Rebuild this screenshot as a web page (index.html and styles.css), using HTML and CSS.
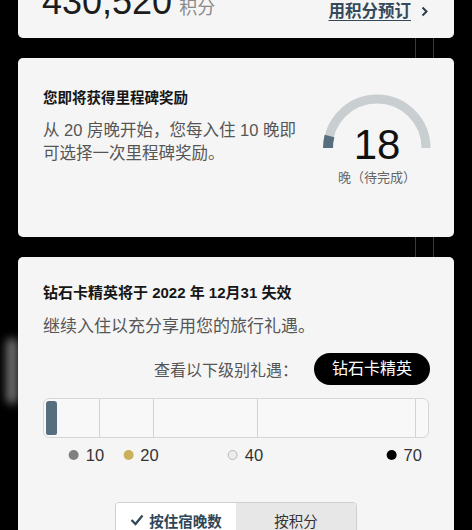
FILE: index.html
```html
<!DOCTYPE html>
<html lang="zh-CN">
<head>
    <meta charset="UTF-8">
    <meta name="viewport" content="width=device-width, initial-scale=1.0">
    <title>会员礼遇</title>
    <link rel="stylesheet" href="styles.css">
</head>
<body>
    <div class="glare"></div>
    <div class="container">
        <div class="card points">
            <div class="points-total">
                <span class="points-value">430,520</span>
                <span class="points-unit">积分</span>
            </div>
            <a class="redeem" href="#">
                <span class="redeem-text">用积分预订</span>
                <svg class="chevron" width="7" height="11" viewBox="0 0 7 11"><path d="M1.5 1.5 L5.5 5.5 L1.5 9.5" fill="none" stroke="#2c3e4c" stroke-width="2"/></svg>
            </a>
        </div>

        <div class="card milestone">
            <div class="milestone-text">
                <h3>您即将获得里程碑奖励</h3>
                <p>从 20 房晚开始，您每入住 10 晚即可选择一次里程碑奖励。</p>
            </div>
            <div class="gauge">
                <svg width="110" height="58" viewBox="0 0 110 58">
                    <!-- track, then the small completed piece on the left end -->
                    <path d="M6 55 A49 49 0 0 1 104 55" fill="none" stroke="#c9ced1" stroke-width="9"/>
                    <path d="M6 55 A49 49 0 0 1 7.5 43.1" fill="none" stroke="#566e7d" stroke-width="10"/>
                </svg>
                <div class="gauge-number">18</div>
                <div class="gauge-label">晚（待完成）</div>
            </div>
        </div>

        <div class="card status">
            <h3>钻石卡精英将于 2022 年 12月31 失效</h3>
            <p class="status-note">继续入住以充分享用您的旅行礼遇。</p>
            <div class="tier-row">
                <span>查看以下级别礼遇：</span>
                <span class="tier-pill">钻石卡精英</span>
            </div>

            <div class="track">
                <div class="track-fill"></div>
                <div class="track-mark" style="left: 14.3%"></div>
                <div class="track-mark" style="left: 28.4%"></div>
                <div class="track-mark" style="left: 55.5%"></div>
                <div class="track-mark" style="left: 96.6%"></div>
            </div>
            <div class="legend">
                <div class="legend-item" style="left: 14.3%"><span class="dot dot-silver"></span>10</div>
                <div class="legend-item" style="left: 28.4%"><span class="dot dot-gold"></span>20</div>
                <div class="legend-item" style="left: 55.5%"><span class="dot dot-platinum"></span>40</div>
                <div class="legend-item" style="left: 96.6%"><span class="dot dot-diamond"></span>70</div>
            </div>

            <div class="toggle">
                <button type="button" class="toggle-btn active">
                    <svg width="14" height="12" viewBox="0 0 14 12"><path d="M1.5 6 L5.5 10 L12.5 1.5" fill="none" stroke="#2e4657" stroke-width="2.2"/></svg>
                    按住宿晚数
                </button>
                <button type="button" class="toggle-btn">按积分</button>
            </div>
        </div>
    </div>
</body>
</html>
```

FILE: styles.css
```css
* { box-sizing: border-box; }
html, body { margin: 0; height: 530px; overflow: hidden; }
body {
    position: relative;
    font-family: "Liberation Sans", "Noto Sans CJK SC", sans-serif;
    color: #1a1a1a;
    background:
        linear-gradient(90deg, transparent 415px, #3a3a3a 415px, #3a3a3a 416px, transparent 416px,
            transparent 433px, #3a3a3a 433px, #3a3a3a 434px, transparent 434px),
        #000;
}
.glare { position: absolute; left: 6px; top: 338px; width: 12px; height: 66px; border-radius: 6px; background: #6e6e6e; filter: blur(4px); }
.container { position: relative; padding: 0 18px; display: flex; flex-direction: column; gap: 20px; }
.card { background: #f5f5f5; border-radius: 5px; }

/* points balance */
.points { margin-top: -40px; height: 78px; padding: 0 26px 18px 24px; display: flex; align-items: flex-end; justify-content: space-between; }
.points-total { display: flex; align-items: baseline; gap: 7px; }
.points-value { font-size: 36px; line-height: 36px; color: #1c1c1c; }
.points-unit { font-size: 18px; color: #8a8a8a; }
.redeem { display: flex; align-items: center; gap: 10px; margin-bottom: -1px; color: #34495a; text-decoration: none; font-size: 16.5px; line-height: 20px; font-weight: bold; }
.redeem-text { text-decoration: underline; text-underline-offset: 3px; }

/* milestone */
.milestone { height: 179px; display: flex; justify-content: space-between; align-items: flex-start; padding: 30px 22px 0 25px; }
.milestone h3, .status h3 { margin: 0; font-size: 14.5px; line-height: 20px; font-weight: bold; color: #161616; }
.milestone p { margin: 11px 0 0; width: 268px; font-size: 16.5px; line-height: 23px; color: #555; }
.gauge { width: 110px; margin-top: 5px; display: flex; flex-direction: column; align-items: center; }
.gauge svg { display: block; }
.gauge-number { margin-top: -27px; font-size: 42px; line-height: 42px; color: #111; }
.gauge-label { margin-top: 3px; font-size: 13px; line-height: 18px; color: #666; }

/* status + progress */
.status { height: 300px; padding: 26px 25px 0 25px; }
.status h3 { font-size: 15px; }
.status-note { margin: 13px 0 0; font-size: 17px; line-height: 22px; color: #555; }
.tier-row { margin-top: 15px; margin-right: -1px; display: flex; justify-content: flex-end; align-items: center; gap: 16px; font-size: 16px; color: #555; }
.tier-pill { height: 32px; line-height: 32px; padding: 0 18px; border-radius: 16px; background: #000; color: #fff; }
.track { position: relative; margin-top: 13px; height: 40px; border: 1px solid #d6d6d6; border-radius: 6px; background: #f8f8f8; }
.track-fill { position: absolute; left: 2px; top: 2px; bottom: 2px; width: 11px; border-radius: 3px 3px 2px 2px; background: #566e7d; }
.track-mark { position: absolute; top: 0; bottom: 0; width: 1px; background: #d3d3d3; }
.legend { position: relative; height: 20px; margin-top: 7px; }
.legend-item { position: absolute; top: 0; display: flex; align-items: center; gap: 7px; transform: translateX(calc(-100% + 6px)); font-size: 16.5px; line-height: 20px; color: #333; white-space: nowrap; }
.dot { width: 10px; height: 10px; border-radius: 50%; }
.dot-silver { background: #808080; }
.dot-gold { background: #c9b15b; }
.dot-platinum { background: #ececec; border: 1px solid #b8b8b8; }
.dot-diamond { background: #000; }

.toggle { margin: 37px auto 0; width: 242px; height: 38px; display: flex; border: 1px solid #cfcfcf; border-radius: 4px; overflow: hidden; }
.toggle-btn { flex: 1; border: 0; padding: 0 0 2px; display: flex; align-items: center; justify-content: center; gap: 5px; font-family: inherit; font-size: 14.5px; background: #e7e7e7; color: #333; }
.toggle-btn.active { background: #fff; color: #2e4657; font-weight: bold; }
```
